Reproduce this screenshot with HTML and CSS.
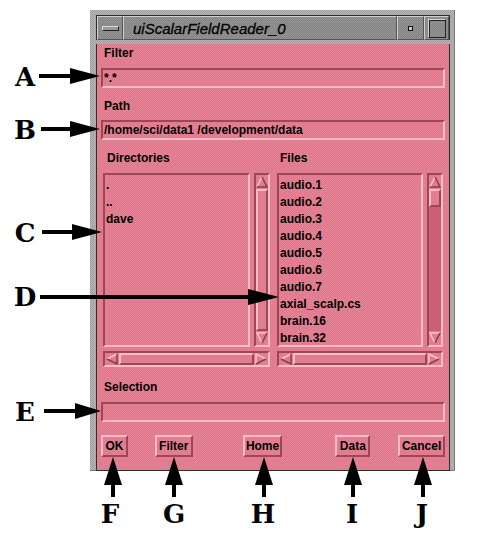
FILE: index.html
```html
<!DOCTYPE html>
<html lang="en">
<head>
    <meta charset="UTF-8">
    <title>uiScalarFieldReader_0</title>
    <link rel="stylesheet" href="styles.css">
</head>
<body>
    <div class="stage">
        <div class="window">
            <!-- window manager title bar -->
            <div class="titlebar">
                <div class="tb-btn tb-menu"><span class="menu-bar"></span></div>
                <div class="tb-title">uiScalarFieldReader_0</div>
                <div class="tb-btn tb-min"><span class="min-dot"></span></div>
                <div class="tb-btn tb-max"><span class="max-box"></span></div>
            </div>

            <div class="client">
                <div class="label label-first">Filter</div>
                <div class="field">*.*</div>

                <div class="label">Path</div>
                <div class="field">/home/sci/data1 /development/data</div>

                <!-- Directories / Files lists -->
                <div class="browser">
                    <div class="pane pane-dirs">
                        <div class="pane-label">Directories</div>
                        <div class="pane-body">
                            <div class="list">
                                <div class="item">.</div>
                                <div class="item">..</div>
                                <div class="item">dave</div>
                            </div>
                            <div class="vscroll">
                                <div class="arrow"><svg width="12" height="12"><polygon points="6,1 11,11 1,11" class="fill"/><polyline points="1,11 6,1" class="hi"/><polyline points="6,1 11,11 1,11" class="lo"/></svg></div>
                                <div class="thumb thumb-full"></div>
                                <div class="arrow"><svg width="12" height="12"><polygon points="1,1 11,1 6,11" class="fill"/><polyline points="11,1 1,1 6,11" class="hi"/><polyline points="6,11 11,1" class="lo"/></svg></div>
                            </div>
                        </div>
                        <div class="hscroll">
                            <div class="arrow"><svg width="12" height="12"><polygon points="1,6 11,1 11,11" class="fill"/><polyline points="11,1 1,6" class="hi"/><polyline points="1,6 11,11 11,1" class="lo"/></svg></div>
                            <div class="thumb thumb-full"></div>
                            <div class="arrow"><svg width="12" height="12"><polygon points="1,1 11,6 1,11" class="fill"/><polyline points="11,6 1,1 1,11" class="hi"/><polyline points="1,11 11,6" class="lo"/></svg></div>
                        </div>
                    </div>

                    <div class="pane pane-files">
                        <div class="pane-label">Files</div>
                        <div class="pane-body">
                            <div class="list">
                                <div class="item">audio.1</div>
                                <div class="item">audio.2</div>
                                <div class="item">audio.3</div>
                                <div class="item">audio.4</div>
                                <div class="item">audio.5</div>
                                <div class="item">audio.6</div>
                                <div class="item">audio.7</div>
                                <div class="item">axial_scalp.cs</div>
                                <div class="item">brain.16</div>
                                <div class="item">brain.32</div>
                            </div>
                            <div class="vscroll trough">
                                <div class="arrow"><svg width="12" height="12"><polygon points="6,1 11,11 1,11" class="fill"/><polyline points="1,11 6,1" class="hi"/><polyline points="6,1 11,11 1,11" class="lo"/></svg></div>
                                <div class="thumb thumb-small"></div>
                                <div class="track"></div>
                                <div class="arrow"><svg width="12" height="12"><polygon points="1,1 11,1 6,11" class="fill"/><polyline points="11,1 1,1 6,11" class="hi"/><polyline points="6,11 11,1" class="lo"/></svg></div>
                            </div>
                        </div>
                        <div class="hscroll">
                            <div class="arrow"><svg width="12" height="12"><polygon points="1,6 11,1 11,11" class="fill"/><polyline points="11,1 1,6" class="hi"/><polyline points="1,6 11,11 11,1" class="lo"/></svg></div>
                            <div class="thumb thumb-full"></div>
                            <div class="arrow"><svg width="12" height="12"><polygon points="1,1 11,6 1,11" class="fill"/><polyline points="11,6 1,1 1,11" class="hi"/><polyline points="1,11 11,6" class="lo"/></svg></div>
                        </div>
                    </div>
                </div>

                <div class="label label-sel">Selection</div>
                <div class="field"></div>

                <div class="buttons">
                    <div class="button btn-ok">OK</div>
                    <div class="button btn-filter">Filter</div>
                    <div class="button btn-home">Home</div>
                    <div class="button btn-data">Data</div>
                    <div class="button btn-cancel">Cancel</div>
                </div>
            </div>
        </div>

        <!-- callout arrows over the dialog -->
        <svg class="callouts" width="488" height="533">
            <rect x="39" y="74" width="33" height="4"/><polygon points="70,68 100,76 70,84"/>
            <rect x="41" y="127" width="31" height="4"/><polygon points="70,121 100,129 70,137"/>
            <rect x="42" y="230" width="32" height="4"/><polygon points="72,224 102,232 72,240"/>
            <rect x="40" y="295" width="210" height="4"/><polygon points="248,289 279,297 248,305"/>
            <rect x="44" y="409" width="33" height="4"/><polygon points="75,403 101,411 75,419"/>
            <rect x="111" y="483" width="4" height="14"/><polygon points="104,485 113,457 122,485"/>
            <rect x="172" y="483" width="4" height="14"/><polygon points="165,485 174,457 183,485"/>
            <rect x="262" y="483" width="4" height="14"/><polygon points="255,485 264,457 273,485"/>
            <rect x="351" y="483" width="4" height="14"/><polygon points="344,485 353,457 362,485"/>
            <rect x="421" y="483" width="4" height="14"/><polygon points="414,485 423,457 432,485"/>
        </svg>
        <span class="tag tag-a">A</span>
        <span class="tag tag-b">B</span>
        <span class="tag tag-c">C</span>
        <span class="tag tag-d">D</span>
        <span class="tag tag-e">E</span>
        <span class="tag tag-f">F</span>
        <span class="tag tag-g">G</span>
        <span class="tag tag-h">H</span>
        <span class="tag tag-i">I</span>
        <span class="tag tag-j">J</span>
    </div>
</body>
</html>
```

FILE: styles.css
```css
body {
    margin: 0;
    background-color: #fff;
    font-family: 'Liberation Sans', Arial, sans-serif;
    color: #000;
}

.stage {
    position: relative;
    width: 488px;
    height: 533px;
    overflow: hidden;
    padding-top: 10px;
    box-sizing: border-box;
}

/* ---------- window frame ---------- */

.window {
    margin-left: 90px;
    width: 365px;
    height: 461px;
    box-sizing: border-box;
    padding: 5px 4px 4px 6px;
    background: repeating-conic-gradient(#b4b4b4 0 25%, #a2a2a2 0 50%) 0 0 / 2px 2px;
    border-right: 1px solid #7a7a7a;
    border-bottom: 1px solid #7a7a7a;
}

.titlebar {
    display: flex;
    height: 25px;
    box-sizing: border-box;
    border: 1px solid #2e2e2e;
    border-bottom: none;
    background: repeating-conic-gradient(#939393 0 25%, #858585 0 50%) 0 0 / 2px 2px;
}

.tb-btn,
.tb-title {
    box-sizing: border-box;
    border-top: 1px solid #cfcfcf;
    border-left: 1px solid #cfcfcf;
    border-right: 1px solid #555;
    border-bottom: 1px solid #555;
    display: flex;
    align-items: center;
    justify-content: center;
}

.tb-menu { width: 26px; }
.tb-min { width: 27px; }
.tb-max { width: 25px; }

.tb-title {
    flex: 1;
    justify-content: flex-start;
    padding-left: 9px;
    font-style: italic;
    font-size: 15px;
    color: #000;
    -webkit-text-stroke: 0.3px #000;
}

.menu-bar {
    width: 15px;
    height: 3px;
    border-top: 1px solid #d8d8d8;
    border-left: 1px solid #d8d8d8;
    border-right: 1px solid #222;
    border-bottom: 1px solid #222;
    background: #9a9a9a;
}

.min-dot {
    width: 3px;
    height: 3px;
    border: 1px solid #111;
    background: #ccc;
}

.max-box {
    width: 16px;
    height: 17px;
    border: 1px solid #222;
    border-top-color: #d8d8d8;
    border-left-color: #d8d8d8;
    box-shadow: inset 1px 1px 0 #222;
}

/* ---------- dialog body ---------- */

.client {
    height: 427px;
    box-sizing: border-box;
    border: 1px solid #2e2e2e;
    border-top: none;
    padding: 0 4px;
    background: repeating-conic-gradient(#e58597 0 25%, #dd7689 0 50%) 0 0 / 2px 2px;
    font-size: 12px;
    font-weight: bold;
}

.label {
    height: 12px;
    padding-top: 2px;
    line-height: 14px;
    padding-left: 3px;
    margin-top: 9px;
}

.label-first { margin-top: 4px; }
.label-sel { margin-top: 12px; height: 13px; padding-top: 1px; }

.field {
    height: 20px;
    box-sizing: border-box;
    margin-top: 9px;
    padding-left: 1px;
    line-height: 16px;
    border: 2px solid;
    border-color: #9c4656 #ffbcc8 #ffbcc8 #9c4656;
}

.label-first + .field { margin-top: 10px; }

.browser {
    display: flex;
    gap: 7px;
    padding-left: 2px;
    margin-top: 10px;
}

.pane-dirs { width: 167px; }
.pane-files { width: 166px; }

.pane-label {
    height: 13px;
    padding-top: 1px;
    line-height: 14px;
    padding-left: 4px;
}

.pane-files .pane-label { padding-left: 3px; }

.pane-body {
    display: flex;
    gap: 4px;
    height: 174px;
    margin-top: 9px;
}

.list {
    flex: 1;
    box-sizing: border-box;
    padding: 2px 1px;
    border: 2px solid;
    border-color: #9c4656 #ffbcc8 #ffbcc8 #9c4656;
    overflow: hidden;
}

.item {
    height: 17px;
    line-height: 16px;
}

.vscroll,
.hscroll {
    display: flex;
    box-sizing: border-box;
    border: 2px solid;
    border-color: #9c4656 #ffbcc8 #ffbcc8 #9c4656;
}

.vscroll {
    width: 16px;
    flex-direction: column;
}

.hscroll {
    height: 16px;
    margin-top: 4px;
}

.trough {
    background: repeating-conic-gradient(#cd6477 0 25%, #c45d70 0 50%) 0 0 / 2px 2px;
}

.arrow {
    width: 12px;
    height: 12px;
    flex: none;
    background: repeating-conic-gradient(#e58597 0 25%, #dd7689 0 50%) 0 0 / 2px 2px;
}

.vscroll .arrow { height: 14px; padding-top: 1px; box-sizing: border-box; }
.hscroll .arrow { width: 14px; padding-left: 1px; box-sizing: border-box; }

.arrow svg { display: block; }

.arrow .fill { fill: #e07c8f; }

.arrow .hi,
.arrow .lo {
    fill: none;
    stroke-width: 1.5;
}

.arrow .hi { stroke: #ffc2cc; }
.arrow .lo { stroke: #8e3c4c; }

.thumb {
    box-sizing: border-box;
    border: 2px solid;
    border-color: #ffbcc8 #9c4656 #9c4656 #ffbcc8;
    background: repeating-conic-gradient(#e58597 0 25%, #dd7689 0 50%) 0 0 / 2px 2px;
}

.thumb-full { flex: 1; }
.thumb-small { height: 18px; flex: none; }
.track { flex: 1; }

/* ---------- action buttons ---------- */

.buttons {
    display: flex;
    margin-top: 13px;
}

.button {
    height: 22px;
    box-sizing: border-box;
    line-height: 18px;
    text-align: center;
    border: 2px solid;
    border-color: #ffbcc8 #9c4656 #9c4656 #ffbcc8;
}

.btn-ok { width: 27px; }
.btn-filter { width: 38px; margin-left: 27px; }
.btn-home { width: 40px; margin-left: 50px; }
.btn-data { width: 35px; margin-left: 53px; }
.btn-cancel { width: 47px; margin-left: 28px; }

/* ---------- callouts ---------- */

.callouts {
    position: absolute;
    left: 0;
    top: 0;
    fill: #000;
}

.tag {
    position: absolute;
    width: 30px;
    text-align: center;
    font-family: 'DejaVu Serif', 'Liberation Serif', serif;
    font-weight: bold;
    font-size: 26px;
    line-height: 30px;
}

.tag-a { left: 10px; top: 62px; }
.tag-b { left: 10px; top: 115px; }
.tag-c { left: 10px; top: 218px; }
.tag-d { left: 10px; top: 282px; }
.tag-e { left: 10px; top: 397px; }
.tag-f { left: 95px; top: 499px; }
.tag-g { left: 159px; top: 499px; }
.tag-h { left: 248px; top: 499px; }
.tag-i { left: 337px; top: 499px; }
.tag-j { left: 407px; top: 499px; }
```
